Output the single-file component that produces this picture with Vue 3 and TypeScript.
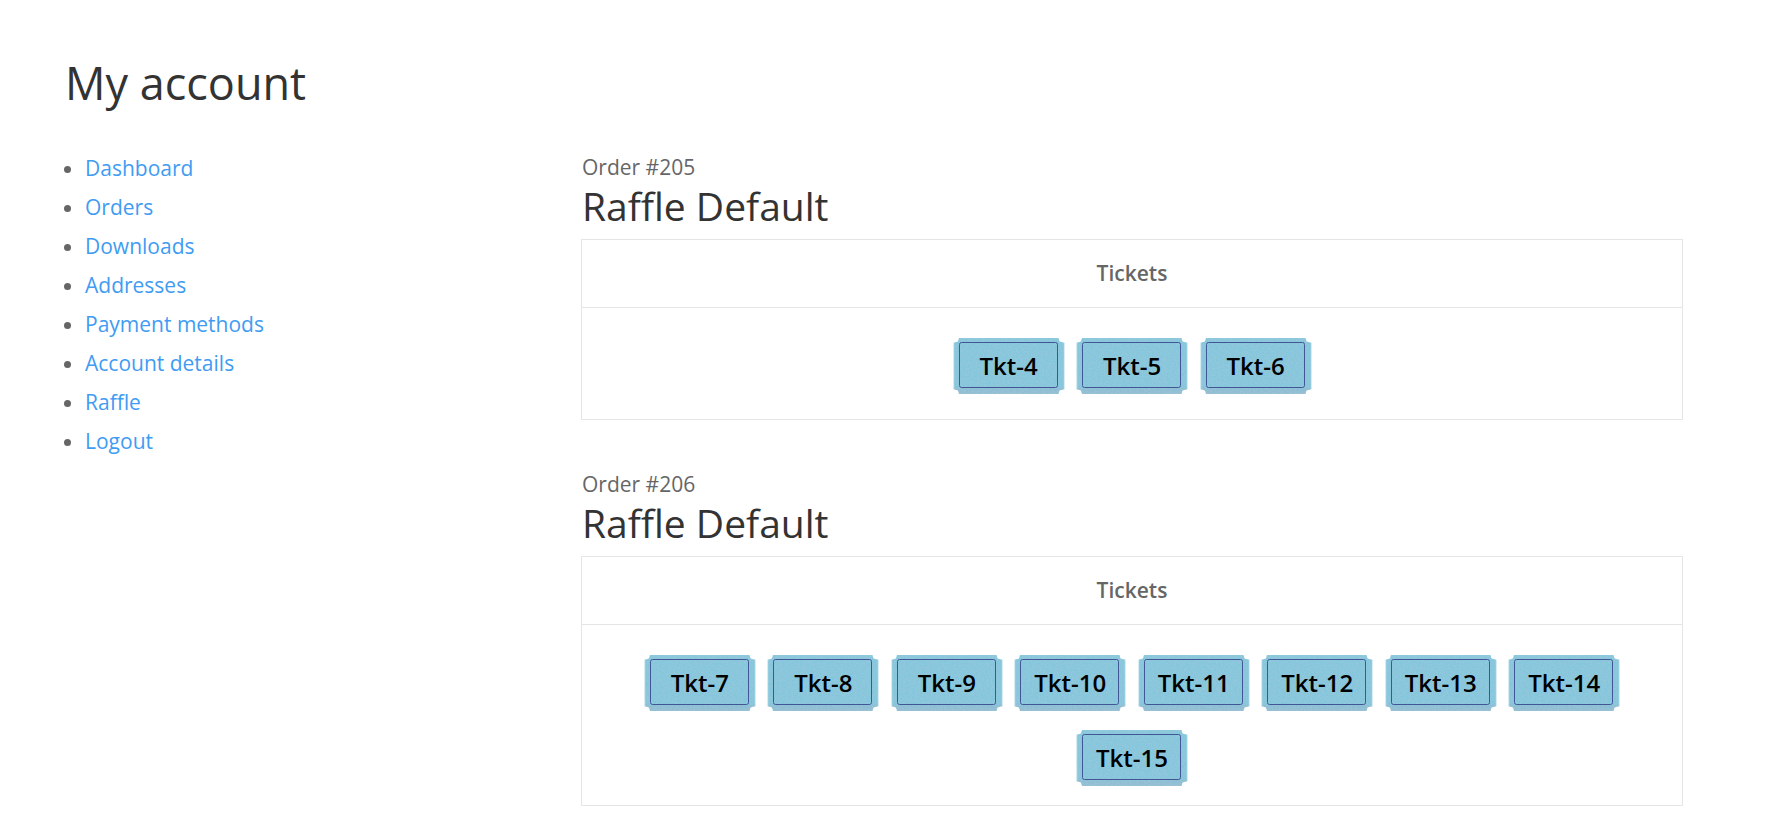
<script setup lang="ts">
const nav: string[] = ['Dashboard', 'Orders', 'Downloads', 'Addresses', 'Payment methods', 'Account details', 'Raffle', 'Logout']
const orders: { id: number; tickets: number[] }[] = [
  { id: 205, tickets: [4, 5, 6] },
  { id: 206, tickets: [7, 8, 9, 10, 11, 12, 13, 14, 15] },
]
function edge(): string {
  const pts: string[] = ['6,0', '105.5,0', '106.5,3.5']
  for (let y = 5; y < 51; y += 2) pts.push(`112,${y}`, `110.4,${y + 1}`)
  pts.push('112,51', '106.5,52.5', '105.5,56', '6,56', '5,52.5', '0,51')
  for (let y = 50; y > 5; y -= 2) pts.push(`1.6,${y}`, `0,${y - 1}`)
  pts.push('5,3.5')
  return pts.join(' ')
}
const outline = edge()
</script>

<template>
  <div class="page">
    <h1 class="title">My account</h1>
    <div class="columns">
      <ul class="nav">
        <li v-for="n in nav" :key="n"><a href="#">{{ n }}</a></li>
      </ul>
      <main class="content">
        <section v-for="o in orders" :key="o.id" class="order">
          <div class="order-no">Order #{{ o.id }}</div>
          <h2 class="raffle">Raffle Default</h2>
          <div class="table">
            <div class="thead">Tickets</div>
            <div class="tbody" :class="{ 'tbody--short': o.tickets.length < 9 }">
              <div v-for="t in o.tickets" :key="t" class="ticket">
                <svg class="ticket-bg" viewBox="0 0 112 56" width="112" height="56" aria-hidden="true">
                  <defs>
                    <linearGradient id="tg" x1="0" y1="0" x2="0" y2="1">
                      <stop offset="0" stop-color="#8ac8dc" />
                      <stop offset="0.08" stop-color="#84c6dc" />
                      <stop offset="0.86" stop-color="#84c6dc" />
                      <stop offset="0.92" stop-color="#8bbdd3" />
                      <stop offset="1" stop-color="#94bfd3" />
                    </linearGradient>
                    <filter id="tn" x="0" y="0" width="100%" height="100%">
                      <feTurbulence type="fractalNoise" baseFrequency="0.6" numOctaves="2" seed="4" result="n" />
                      <feColorMatrix in="n" type="matrix" values="0 0 0 0 0.4  0 0 0 0 0.6  0 0 0 0 0.72  0.9 0 0 0 -0.3" result="c" />
                      <feComposite in="c" in2="SourceAlpha" operator="in" result="s" />
                      <feMerge>
                        <feMergeNode in="SourceGraphic" />
                        <feMergeNode in="s" />
                      </feMerge>
                    </filter>
                  </defs>
                  <polygon :points="outline" fill="url(#tg)" filter="url(#tn)" />
                  <rect x="6.5" y="4.5" width="98" height="45" rx="2" fill="none" stroke="#415795" />
                </svg>
                <span class="ticket-label">Tkt-{{ t }}</span>
              </div>
            </div>
          </div>
        </section>
      </main>
    </div>
  </div>
</template>

<style>
body { background: #fff; }
</style>

<style scoped>
.page {
  padding: 48px 107px 0 65px;
  font-family: "Open Sans", sans-serif;
  color: #666;
}
.title {
  margin: 0;
  font-size: 45px;
  line-height: 70px;
  font-weight: 400;
  color: #333;
}
.columns {
  display: flex;
  margin-top: 31px;
}
.nav {
  width: 496px;
  flex: none;
  margin: 0;
  padding: 0 0 0 20px;
  font-size: 21px;
  line-height: 39px;
}
.nav li::marker { color: #666; }
.nav a { color: #3f9cf2; text-decoration: none; }
.content { flex: 1; min-width: 0; padding-top: 3px; }
.order { margin-bottom: 49px; }
.order-no {
  padding-left: 1px;
  font-size: 21px;
  line-height: 30px;
}
.raffle {
  margin: 0;
  padding-left: 1px;
  font-size: 39px;
  line-height: 47px;
  font-weight: 400;
  color: #333;
}
.table { margin-top: 10px; border: 1px solid #e5e5e5; }
.thead {
  height: 67px;
  line-height: 67px;
  text-align: center;
  font-size: 21px;
  font-weight: 600;
  border-bottom: 1px solid #e5e5e5;
}
.tbody {
  display: flex;
  flex-wrap: wrap;
  justify-content: center;
  gap: 19px 11.5px;
  padding: 30px 8px 19px;
}
.tbody--short { padding-bottom: 25px; }
.ticket {
  position: relative;
  width: 112px;
  height: 56px;
  padding-bottom: 2px;
  box-sizing: border-box;
  display: flex;
  align-items: center;
  justify-content: center;
}
.ticket-bg { position: absolute; left: 0; top: 0; }
.ticket-label {
  position: relative;
  font-size: 24px;
  font-weight: 600;
  color: #000;
}
</style>
